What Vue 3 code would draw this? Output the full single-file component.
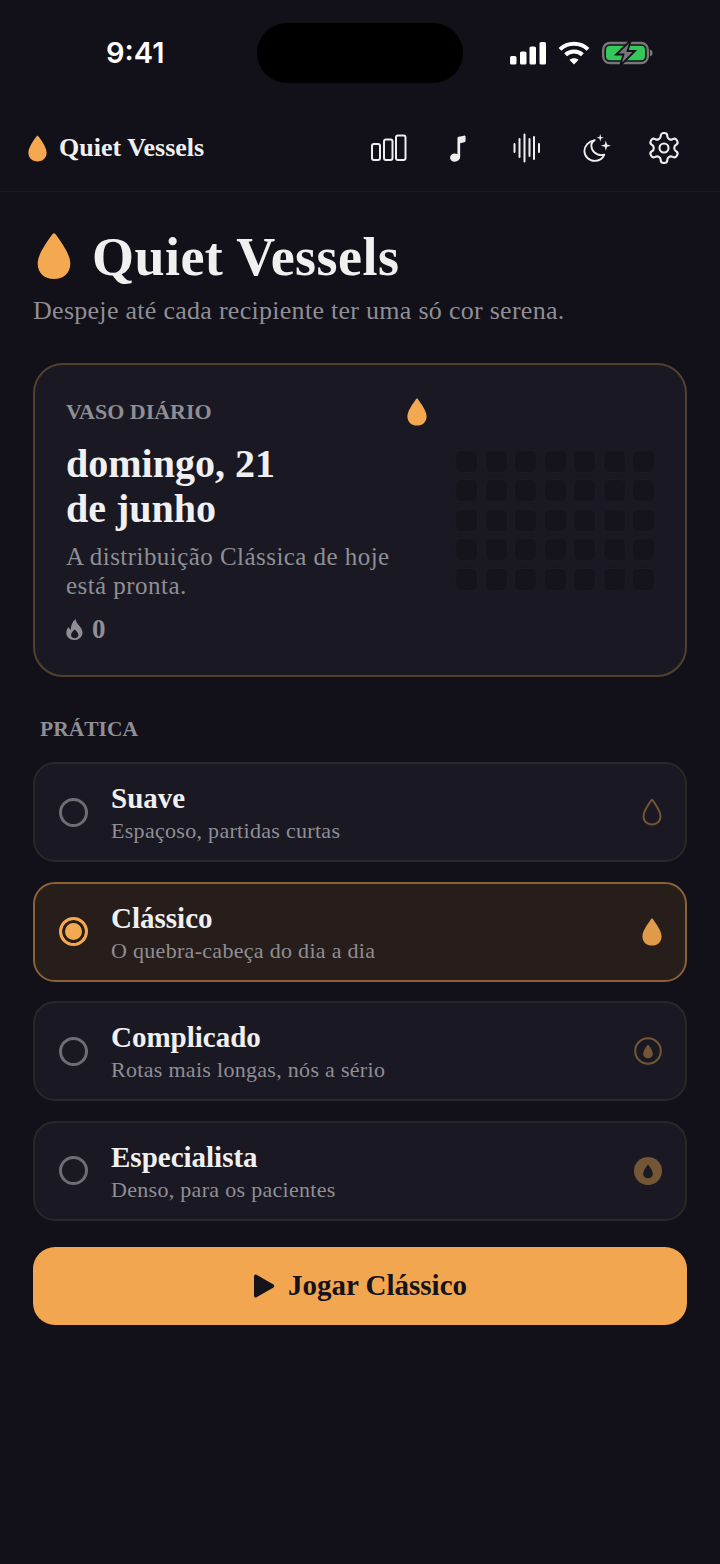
<script setup>
const drop = 'M10 .6C9.5.6 8.9 1.3 8.3 2.2 5.4 6.3.4 13.2.4 18.4.4 24 4.6 27.6 10 27.6s9.6-3.6 9.6-9.2C19.6 13.2 14.6 6.3 11.7 2.2 11.1 1.3 10.5.6 10 .6Z'
const gear = 'M12.22 2h-.44a2 2 0 0 0-2 2v.18a2 2 0 0 1-1 1.73l-.43.25a2 2 0 0 1-2 0l-.15-.08a2 2 0 0 0-2.73.73l-.22.38a2 2 0 0 0 .73 2.73l.15.1a2 2 0 0 1 1 1.72v.51a2 2 0 0 1-1 1.74l-.15.09a2 2 0 0 0-.73 2.73l.22.38a2 2 0 0 0 2.73.73l.15-.08a2 2 0 0 1 2 0l.43.25a2 2 0 0 1 1 1.73V20a2 2 0 0 0 2 2h.44a2 2 0 0 0 2-2v-.18a2 2 0 0 1 1-1.73l.43-.25a2 2 0 0 1 2 0l.15.08a2 2 0 0 0 2.73-.73l.22-.39a2 2 0 0 0-.73-2.73l-.15-.08a2 2 0 0 1-1-1.74v-.5a2 2 0 0 1 1-1.74l.15-.09a2 2 0 0 0 .73-2.73l-.22-.38a2 2 0 0 0-2.73-.73l-.15.08a2 2 0 0 1-2 0l-.43-.25a2 2 0 0 1-1-1.73V4a2 2 0 0 0-2-2z'

const modes = [
  { name: 'Suave', sub: 'Espaçoso, partidas curtas', icon: 'outline' },
  { name: 'Clássico', sub: 'O quebra-cabeça do dia a dia', icon: 'solid', active: true },
  { name: 'Complicado', sub: 'Rotas mais longas, nós a sério', icon: 'ring' },
  { name: 'Especialista', sub: 'Denso, para os pacientes', icon: 'disc' },
]
</script>

<template>
  <div class="screen">
    <div class="status">
      <span class="time">9:41</span>
      <div class="island"></div>
      <div class="status-icons">
        <svg width="36" height="24" viewBox="0 0 36 24" fill="#fff">
          <rect x="0" y="15" width="6.5" height="8.500" rx="1.600" />
          <rect x="10" y="10.500" width="6.5" height="13" rx="1.600" />
          <rect x="19.500" y="5.500" width="6.5" height="18" rx="1.600" />
          <rect x="29.500" y="1" width="6.5" height="22.500" rx="1.600" />
        </svg>
        <svg width="32" height="24" viewBox="0 0 32 24" fill="none" stroke="#fff" stroke-width="4">
          <path d="M2 8.400C9.600 1 22.400 1 30 8.400" />
          <path d="M7.600 13.800c4.600-4.300 12.200-4.300 16.800 0" />
          <path d="M16 23.600l-4.600-4.800c2.600-2.200 6.600-2.200 9.200 0z" fill="#fff" stroke="none" />
        </svg>
        <svg width="51" height="26" viewBox="0 0 51 26">
          <rect x="1.200" y="3" width="44.600" height="20" rx="6.500" fill="none" stroke="#77777b" stroke-width="2.400" />
          <rect x="4" y="5.800" width="39" height="14.400" rx="4" fill="#34c759" />
          <path d="M47.800 9.500c1.800.6 2.800 1.900 2.800 3.500s-1 2.900-2.800 3.500z" fill="#77777b" />
          <path d="M29 0 14 14.500h7.500L18 26l15-15h-7.500z" fill="#77777b" stroke="#121018" stroke-width="1.800" />
        </svg>
      </div>
    </div>

    <header class="topbar">
      <div class="brand">
        <svg class="brand-drop" viewBox="0 0 20 28"><path :d="drop" /></svg>
        <span>Quiet Vessels</span>
      </div>
      <nav class="tools">
        <button class="tool">
          <svg class="nudge" width="36" height="28" viewBox="0 0 36 28" fill="none" stroke="#eee" stroke-width="2">
            <rect x="1" y="10" width="8" height="16" rx="2" />
            <rect x="13" y="5.500" width="8.500" height="20.500" rx="2" />
            <rect x="25" y="1.500" width="9.500" height="24.500" rx="2" />
          </svg>
        </button>
        <button class="tool">
          <svg width="18" height="29" viewBox="0 0 20 30" fill="#eee">
            <path d="M10.500 3.600c0-.9.5-1.500 1.300-1.700L17.600.7c1-.2 1.900.5 1.900 1.500v4.300c0 .9-.5 1.400-1.400 1.600l-4.600 1v15.200c0 3.100-2.600 5.400-6.100 5.400-3 0-5.100-1.800-5.100-4.400 0-2.700 2.200-4.800 5.300-4.800 1.100 0 2.100.3 2.900.8z" />
          </svg>
        </button>
        <button class="tool">
          <svg class="nudge" width="28" height="30" viewBox="0 0 28 30" stroke="#eee" stroke-width="2" stroke-linecap="round">
            <path d="M1.500 11v8M6.500 6v18M11.500 1.500v27M16.500 6v17M21 4v22M26 11v8" />
          </svg>
        </button>
        <button class="tool">
          <svg class="nudge-more" width="28" height="30" viewBox="0 0 30 30">
            <path d="M12.500 6.500C6 7.800 1.500 12.600 1.500 18.200c0 6 5 10.600 11 10.600 4.700 0 8.700-2.700 10.300-6.700-1 .3-2 .5-3.100.5-6 0-10.800-4.700-10.800-10.500 0-2.100.9-4.100 3.600-5.600z" fill="none" stroke="#eee" stroke-width="2" stroke-linejoin="round" />
            <path d="M18.500 0l.9 3.100 3.100.9-3.100.9-.9 3.100-.9-3.100-3.100-.9 3.100-.9zM24.500 7l1.200 4.300 4.300 1.200-4.300 1.200-1.200 4.300-1.200-4.300-4.300-1.200 4.300-1.200z" fill="#eee" />
          </svg>
        </button>
        <button class="tool">
          <svg width="36" height="36" viewBox="0 0 24 24" fill="none" stroke="#eee" stroke-width="1.400" stroke-linecap="round" stroke-linejoin="round">
            <path :d="gear" />
            <circle cx="12" cy="12" r="3" />
          </svg>
        </button>
      </nav>
    </header>

    <main class="content">
      <div class="hero">
        <svg class="hero-drop" viewBox="0 0 20 28"><path :d="drop" /></svg>
        <h1>Quiet Vessels</h1>
      </div>
      <p class="tagline">Despeje até cada recipiente ter uma só cor serena.</p>

      <section class="daily">
        <div class="daily-text">
          <div class="daily-head">
            <span class="eyebrow">VASO DIÁRIO</span>
            <svg class="daily-drop" viewBox="0 0 20 28"><path :d="drop" /></svg>
          </div>
          <h2>domingo, 21<br />de junho</h2>
          <p class="daily-desc">A distribuição Clássica de hoje está pronta.</p>
          <div class="streak">
            <svg width="17" height="21" viewBox="0 0 17 21">
              <path fill-rule="evenodd" fill="#8f8e95" d="M9.500 0c.6 3.200 2 4.800 3.700 6.700 1.700 1.900 3.300 4 3.300 7 0 4.100-3.500 7.300-8.200 7.300C3.600 21 .3 17.800.3 13.800c0-2.300 1-4.300 2.500-5.800.3 1.300 1 2.300 2 2.800C4.800 6.800 6.200 2.700 9.500 0ZM8.700 10.500c-2 1.900-3.700 3.400-3.700 5.400 0 1.900 1.700 3.300 3.700 3.300s3.700-1.400 3.700-3.300c0-2-1.700-3.500-3.700-5.400Z" />
            </svg>
            <span>0</span>
          </div>
        </div>
        <div class="preview">
          <span v-for="n in 35" :key="n" class="cell"></span>
        </div>
      </section>

      <h3 class="section-label">PRÁTICA</h3>

      <div class="modes">
        <div v-for="m in modes" :key="m.name" class="mode" :class="{ active: m.active }">
          <span class="radio"></span>
          <div class="mode-text">
            <span class="mode-name">{{ m.name }}</span>
            <span class="mode-sub">{{ m.sub }}</span>
          </div>
          <svg v-if="m.icon === 'outline'" class="mode-icon" width="20" height="28" viewBox="0 0 20 28">
            <path d="M10 1.800C9.700 1.800 9.300 2.300 8.800 3 6 7 1.500 13.500 1.500 18.400 1.500 23.300 5.200 26.500 10 26.500s8.500-3.200 8.500-8.100C18.500 13.500 14 7 11.200 3 10.700 2.300 10.300 1.800 10 1.800Z" fill="none" stroke="#745636" stroke-width="2" />
          </svg>
          <svg v-else-if="m.icon === 'solid'" class="mode-icon" width="20" height="28" viewBox="0 0 20 28">
            <path :d="drop" fill="#e09a4a" />
          </svg>
          <svg v-else-if="m.icon === 'ring'" class="mode-icon" width="28" height="28" viewBox="0 0 28 28">
            <circle cx="14" cy="14" r="12.800" fill="none" stroke="#745636" stroke-width="2" />
            <path transform="translate(9 7.500) scale(.5)" :d="drop" fill="#745636" />
          </svg>
          <svg v-else class="mode-icon" width="28" height="28" viewBox="0 0 28 28">
            <circle cx="14" cy="14" r="14" fill="#745636" />
            <path transform="translate(9 7.500) scale(.5)" :d="drop" fill="#1a1923" />
          </svg>
        </div>
      </div>

      <button class="play">
        <svg width="22" height="24" viewBox="0 0 22 24"><path d="M1 2.200C1 .8 2.300 0 3.500.7l17 9.800c1.100.7 1.100 2.300 0 3l-17 9.800C2.300 24 1 23.200 1 21.800Z" fill="#14121a" /></svg>
        <span>Jogar Clássico</span>
      </button>
    </main>
  </div>
</template>

<style scoped>
.screen {
  position: relative;
  width: 720px;
  min-height: 1564px;
  background: #121018;
  color: #f0f0f1;
  font-family: "Liberation Serif", "Times New Roman", serif;
}

.status {
  height: 107px;
  display: flex;
  justify-content: space-between;
  align-items: flex-start;
  padding: 0 67px 0 106px;
  box-sizing: border-box;
}

.time {
  margin-top: 35px;
  font-family: Inter, "Liberation Sans", sans-serif;
  font-size: 29px;
  line-height: 36px;
  font-weight: 600;
  color: #fff;
}

.island {
  position: absolute;
  left: 257px;
  top: 23px;
  width: 206px;
  height: 60px;
  border-radius: 30px;
  background: #000;
}

.status-icons {
  margin-top: 40px;
  display: flex;
  align-items: center;
  gap: 12px;
}

.topbar {
  height: 85px;
  box-sizing: border-box;
  display: flex;
  align-items: center;
  justify-content: space-between;
  padding: 0 34px 2px 28px;
  border-bottom: 1px solid #1a1820;
}

.brand {
  display: flex;
  align-items: center;
  gap: 12px;
  font-size: 26px;
  font-weight: 700;
}

.brand-drop {
  width: 19px;
  height: 27px;
  fill: #f4a950;
}

.tools {
  display: flex;
  gap: 25px;
}

.tool {
  width: 44px;
  height: 44px;
  padding: 0;
  border: 0;
  background: none;
  display: flex;
  align-items: center;
  justify-content: center;
}

.nudge {
  margin-left: 2px;
}

.nudge-more {
  margin-left: 4px;
}

.content {
  padding: 0 33px;
}

.hero {
  display: flex;
  align-items: center;
  gap: 21px;
  margin: 36px 0 0 4px;
}

.hero-drop {
  width: 34px;
  height: 48px;
  margin-top: -2px;
  fill: #f4a950;
}

h1 {
  margin: 0;
  font-size: 54px;
  line-height: 58px;
  letter-spacing: .450px;
  font-weight: 700;
}

.tagline {
  margin: 10px 0 0;
  font-size: 26px;
  line-height: 30px;
  letter-spacing: .280px;
  color: #8f8e95;
}

.daily {
  margin-top: 37px;
  height: 314px;
  box-sizing: border-box;
  padding: 0 31px;
  display: flex;
  align-items: center;
  gap: 28px;
  background: #1a1923;
  border: 2px solid #54412e;
  border-radius: 30px;
}

.daily-text {
  width: 361px;
  flex: none;
  align-self: flex-start;
  margin-top: 33px;
}

.daily-head {
  display: flex;
  justify-content: space-between;
  align-items: center;
  height: 28px;
}

.eyebrow {
  font-size: 22px;
  font-weight: 700;
  color: #8f8e95;
}

.daily-drop {
  width: 20px;
  height: 28px;
  fill: #f4a950;
}

h2 {
  margin: 15px 0 0;
  font-size: 40px;
  line-height: 45px;
  font-weight: 700;
}

.daily-desc {
  margin: 11px 0 0;
  font-size: 25px;
  line-height: 29px;
  letter-spacing: .450px;
  color: #8f8e95;
}

.streak {
  margin-top: 14px;
  display: flex;
  align-items: center;
  gap: 9px;
  font-size: 27px;
  line-height: 30px;
  font-weight: 700;
  color: #8f8e95;
}

.preview {
  display: grid;
  grid-template-columns: repeat(7, 23px);
  grid-auto-rows: 23px;
  gap: 6.500px;
}

.cell {
  background: #15131b;
  border-radius: 6px;
  border: 1px solid #1c1b24;
  box-sizing: border-box;
}

.section-label {
  margin: 38px 0 19px 7px;
  font-size: 21.500px;
  line-height: 28px;
  font-weight: 700;
  color: #8f8e95;
}

.modes {
  display: flex;
  flex-direction: column;
  gap: 19.500px;
}

.mode {
  height: 100px;
  box-sizing: border-box;
  padding: 0 23px 0 24px;
  display: flex;
  align-items: center;
  gap: 23px;
  background: #1a1923;
  border: 2px solid #2a2728;
  border-radius: 22px;
}

.mode.active {
  background: #271e1b;
  border-color: #8a6236;
}

.radio {
  flex: none;
  width: 29px;
  height: 29px;
  box-sizing: border-box;
  border: 3px solid #6e6d73;
  border-radius: 50%;
}

.active .radio {
  border-color: #f4a950;
  background: #f4a950;
  box-shadow: inset 0 0 0 3px #271e1b;
}

.mode-text {
  flex: 1;
  display: flex;
  flex-direction: column;
  padding-top: 3px;
  padding-bottom: 2px;
}

.mode-name {
  font-size: 29px;
  line-height: 33px;
  font-weight: 700;
}

.mode-sub {
  margin-top: 3px;
  font-size: 22px;
  line-height: 25px;
  letter-spacing: .300px;
  color: #8f8e95;
}

.play {
  margin-top: 26px;
  width: 100%;
  height: 78px;
  border: 0;
  border-radius: 22px;
  background: #f2a64f;
  display: flex;
  align-items: center;
  justify-content: center;
  gap: 13px;
  color: #14121a;
  font-family: inherit;
  font-size: 29px;
  font-weight: 700;
}
</style>

<style>
html, body {
  margin: 0;
  background: #121018;
}
</style>
